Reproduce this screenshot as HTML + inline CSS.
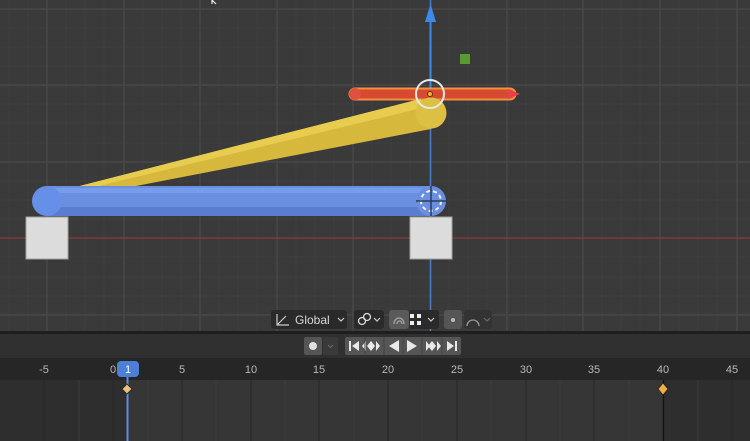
<!DOCTYPE html>
<html><head><meta charset="utf-8"><style>
body{margin:0;width:750px;height:441px;overflow:hidden;background:#3a3a3a;font-family:"Liberation Sans",sans-serif}
svg{position:absolute;left:0;top:0}
</style></head><body>
<svg width="750" height="441" viewBox="0 0 750 441">
<rect x="0" y="0" width="750" height="331" fill="#3a3a3a"/>
<g stroke="#3f3f3f" stroke-width="1">
<path d="M9 0V331M28 0V331M66 0V331M85 0V331M104 0V331M143 0V331M162 0V331M181 0V331M219 0V331M238 0V331M257 0V331M296 0V331M315 0V331M334 0V331M372 0V331M391 0V331M410 0V331M449 0V331M468 0V331M487 0V331M526 0V331M545 0V331M564 0V331M602 0V331M621 0V331M640 0V331M679 0V331M698 0V331M717 0V331"/>
<path d="M0 28H750M0 47H750M0 66H750M0 104H750M0 123H750M0 143H750M0 181H750M0 200H750M0 219H750M0 257H750M0 277H750M0 296H750"/>
</g>
<g stroke="#4a4a4a" stroke-width="1.2">
<path d="M47 0V331M124 0V331M200 0V331M277 0V331M353 0V331M507 0V331M583 0V331M660 0V331M737 0V331"/>
<path d="M0 9H750M0 85H750M0 162H750M0 315H750"/>
</g>
<line x1="0" y1="238" x2="750" y2="238" stroke="#8a3a40" stroke-width="1.2"/>
<line x1="430.5" y1="0" x2="430.5" y2="331" stroke="#4a7ec8" stroke-width="1.5"/>
<line x1="430.5" y1="20" x2="430.5" y2="95" stroke="#3f8ae8" stroke-width="2"/>
<polygon points="430.5,4 425,22 436,22" fill="#3f8ae8"/>
<rect x="460" y="54" width="10" height="10" fill="#5a9a30"/>
<line x1="355" y1="94" x2="510" y2="94" stroke="#f09040" stroke-width="13" stroke-linecap="round"/>
<line x1="355" y1="94" x2="510" y2="94" stroke="#d84a30" stroke-width="9" stroke-linecap="round"/>
<circle cx="355" cy="94" r="6" fill="#e05040"/>
<polygon points="508,89 520,94 508,99" fill="#e8404a"/>
<polygon points="60,191 420,99 446,113 431,129 110,191" fill="#d6b83c"/>
<polygon points="60,191 420,99 430,106 90,188" fill="#e8cc50"/>
<circle cx="431" cy="113" r="15.5" fill="#dcc044"/>
<rect x="47" y="186" width="384" height="30" fill="#6a8ee0"/>
<rect x="47" y="207" width="384" height="9" fill="#5a7dd0"/>
<rect x="47" y="188" width="384" height="5" fill="#789cec"/>
<circle cx="47" cy="201" r="15" fill="#6690e8"/>
<circle cx="431" cy="201" r="15" fill="#6a8ee0"/>
<circle cx="431" cy="201" r="10" fill="none" stroke="#f0f0f0" stroke-width="2" stroke-dasharray="4 3"/>
<path d="M431 186V216M416 201H446" stroke="#2a3a5a" stroke-width="1.5"/>
<circle cx="430" cy="94" r="14" fill="none" stroke="#e8e8e8" stroke-width="2"/>
<circle cx="430" cy="94" r="2.5" fill="#f8b030" stroke="#603010" stroke-width="1"/>
<rect x="26" y="217" width="42" height="42" fill="#dcdcdc" stroke="#a0a0a0"/>
<rect x="410" y="217" width="42" height="42" fill="#dcdcdc" stroke="#a0a0a0"/>
<rect x="271" y="310" width="76" height="19" rx="3" fill="#2a2a2a"/>
<text x="295" y="324" font-size="12" fill="#d8d8d8">Global</text>
<path d="M277 314V325H289M277 325L286 316" stroke="#ccc" stroke-width="1.2" fill="none"/>
<path d="M338 318l3 3 3-3" stroke="#ccc" fill="none" stroke-width="1.2"/>
<rect x="354" y="310" width="30" height="19" rx="3" fill="#2a2a2a"/>
<circle cx="362" cy="321" r="3.5" fill="none" stroke="#ddd" stroke-width="1.3"/><circle cx="367" cy="317" r="3.5" fill="none" stroke="#ddd" stroke-width="1.3"/>
<path d="M374 318l3 3 3-3" stroke="#ccc" fill="none" stroke-width="1.2"/>
<rect x="389" y="310" width="20" height="19" rx="3" fill="#5a5a5a"/>
<path d="M394 324a5 6 0 1 1 10 0M397 324a2.5 3 0 1 1 5 0" stroke="#999" fill="none" stroke-width="1.5"/>
<rect x="409" y="310" width="30" height="19" rx="3" fill="#2a2a2a"/>
<rect x="410" y="314" width="4" height="4" fill="#eee"/><rect x="417" y="314" width="4" height="4" fill="#eee"/><rect x="410" y="321" width="4" height="4" fill="#eee"/><rect x="417" y="321" width="4" height="4" fill="#eee"/>
<path d="M428 318l3 3 3-3" stroke="#ccc" fill="none" stroke-width="1.2"/>
<rect x="444" y="310" width="18" height="19" rx="3" fill="#555"/>
<circle cx="453" cy="320" r="2" fill="#bbb"/>
<rect x="464" y="310" width="28" height="19" rx="3" fill="#333"/>
<path d="M467 326a6 6 0 0 1 12 0" stroke="#999" fill="none" stroke-width="1.3"/>
<path d="M484 318l3 3 3-3" stroke="#666" fill="none" stroke-width="1.2"/>
<rect x="0" y="331" width="750" height="3" fill="#1e1e1e"/>
<rect x="0" y="334" width="750" height="24" fill="#303030"/>
<rect x="0" y="358" width="750" height="22" fill="#262626"/>
<rect x="0" y="380" width="750" height="61" fill="#2e2e2e"/>
<rect x="127" y="380" width="536" height="61" fill="#363636"/>
<g stroke="#2a2a2a" stroke-width="1.3">
<path d="M44 380V441M113 380V441M182 380V441M251 380V441M319 380V441M388 380V441M457 380V441M526 380V441M594 380V441M732 380V441"/>
</g>
<g stroke="#3c3c3c" stroke-width="1">
<path d="M79 380V441M148 380V441M216 380V441M285 380V441M354 380V441M422 380V441M491 380V441M560 380V441M629 380V441M698 380V441"/>
</g>
<line x1="663.5" y1="380" x2="663.5" y2="441" stroke="#111" stroke-width="1.3"/>
<g font-size="11" fill="#b8b8b8" text-anchor="middle">
<text x="44" y="373">-5</text><text x="113" y="373">0</text><text x="182" y="373">5</text><text x="251" y="373">10</text><text x="319" y="373">15</text><text x="388" y="373">20</text><text x="457" y="373">25</text><text x="526" y="373">30</text><text x="594" y="373">35</text><text x="663" y="373">40</text><text x="732" y="373">45</text>
</g>
<rect x="117" y="361" width="22" height="16" rx="4" fill="#4d7fd6"/>
<text x="128" y="373" font-size="11" fill="#fff" text-anchor="middle">1</text>
<line x1="127.5" y1="377" x2="127.5" y2="441" stroke="#5d8ee0" stroke-width="2"/>
<polygon points="127,384 132,389 127,394 122,389" fill="#e8c080" stroke="#222" stroke-width="0.8"/>
<polygon points="663,383 668,389 663,395 658,389" fill="#f0b040" stroke="#222" stroke-width="0.8"/>
<rect x="304" y="337" width="18" height="18" rx="2" fill="#555"/><circle cx="313" cy="346" r="4" fill="#e0e0e0"/>
<rect x="323" y="337" width="15" height="18" rx="2" fill="#3a3a3a"/><path d="M328 345l2.5 2.5 2.5-2.5" stroke="#666" fill="none"/>
<rect x="345" y="337" width="116" height="18" rx="2" fill="#555"/>
<g fill="#e8e8e8">
<rect x="349" y="341" width="2" height="10"/><polygon points="359,341 352,346 359,351"/>
<polygon points="366,341 362,346 366,351"/><polygon points="371,341 367,346 371,351 375,346"/><polygon points="376,341 380,346 376,351"/>
<polygon points="399,340 389,346 399,352"/>
<polygon points="407,340 417,346 407,352"/>
<polygon points="426,341 430,346 426,351"/><polygon points="432,341 428,346 432,351 436,346"/><polygon points="437,341 441,346 437,351"/>
<polygon points="447,341 454,346 447,351"/><rect x="455" y="341" width="2" height="10"/>
</g>
<g stroke="#444"><path d="M365 337V355M384 337V355M403 337V355M422 337V355M442 337V355"/></g>
<path d="M212 0l4 4M212 0v4" stroke="#eee" stroke-width="1.2"/>
</svg>
</body></html>
